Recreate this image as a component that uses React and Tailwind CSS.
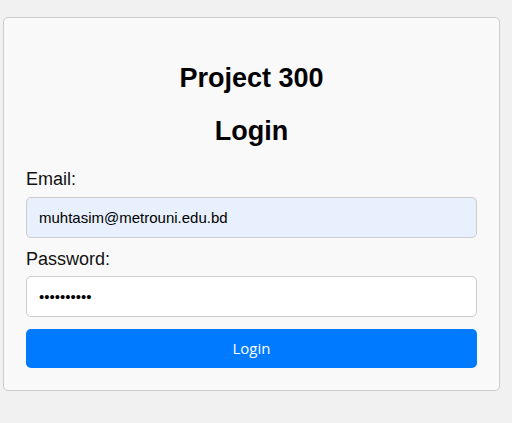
import React from "react";

export default function App() {
  return (
    <div className="min-h-[423px] w-[512px] bg-[#f1f1f1] pt-[17px] font-['Liberation_Sans',Arial,sans-serif]">
      <div className="ml-[3px] w-[497px] rounded-[5px] border border-[#cccccc] bg-[#f9f9f9] px-[22px] pt-[22px] pb-[22px] flex flex-col">
        <h2 className="mt-[23px] text-center text-[27px] font-bold leading-[30px] text-black">Project 300</h2>
        <h2 className="mt-[23px] text-center text-[27px] font-bold leading-[30px] text-black">Login</h2>
        <label className="mt-[23px] text-[18px] leading-[21px] text-[#111]">Email:</label>
        <input
          type="email"
          readOnly
          value="muhtasim@metrouni.edu.bd"
          className="mt-[7px] h-[41px] w-full rounded-[5px] border border-[#cccccc] bg-[#e8f0fe] px-[12px] text-[15px] text-black outline-none font-['Liberation_Sans',Arial,sans-serif]"
        />
        <label className="mt-[11px] text-[18px] leading-[21px] text-[#111]">Password:</label>
        <input
          type="password"
          readOnly
          value="1234567890"
          className="mt-[6px] h-[41px] w-full rounded-[5px] border border-[#cccccc] bg-white px-[12px] text-[15px] text-black outline-none font-['Liberation_Sans',Arial,sans-serif]"
        />
        <button className="mt-[12px] h-[39px] w-full rounded-[5px] bg-[#007bff] text-[15px] text-white font-['Open_Sans','Liberation_Sans',sans-serif]">
          Login
        </button>
      </div>
    </div>
  );
}
